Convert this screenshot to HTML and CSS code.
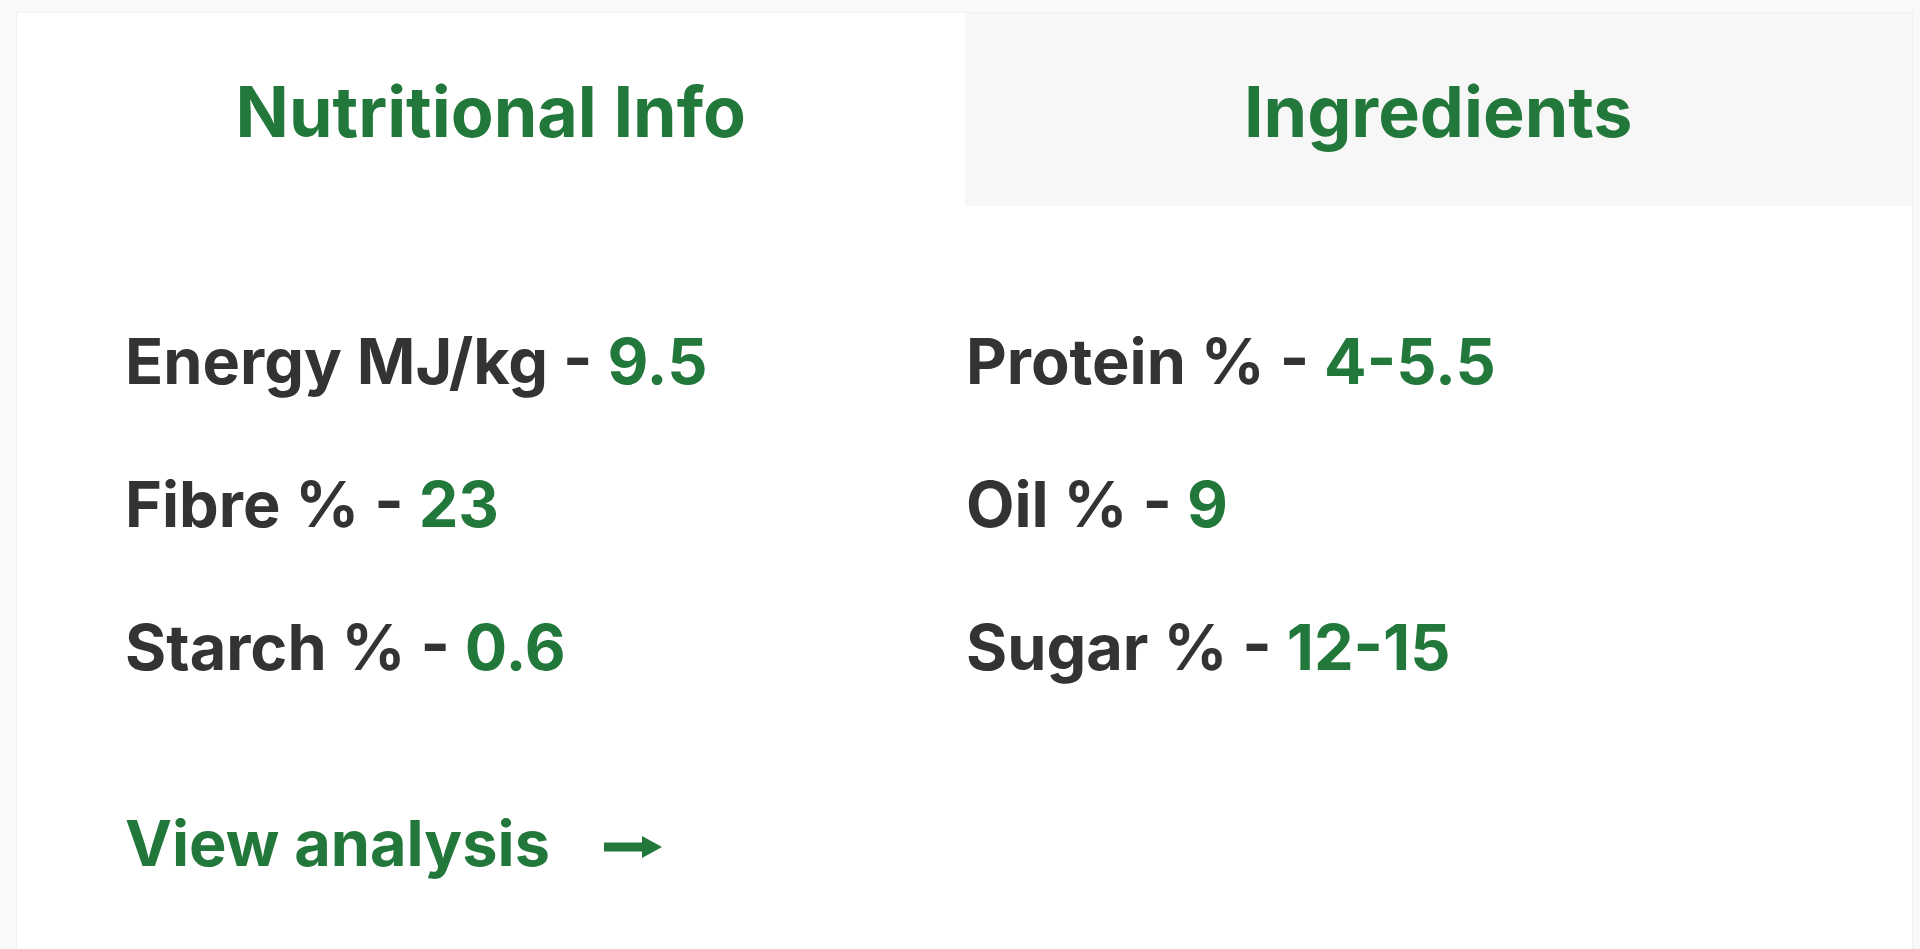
FILE: index.html
```html
<!DOCTYPE html>
<html lang="en">
<head>
    <meta charset="UTF-8">
    <meta name="viewport" content="width=device-width, initial-scale=1.0">
    <title>Nutritional Info</title>
    <link rel="stylesheet" href="styles.css">
</head>
<body>
    <div class="card">
        <div class="tabs">
            <div class="tab active">Nutritional Info</div>
            <div class="tab">Ingredients</div>
        </div>
        <div class="panel">
            <div class="facts">
                <div class="fact">Energy MJ/kg - <span class="value">9.5</span></div>
                <div class="fact">Protein % - <span class="value">4-5.5</span></div>
                <div class="fact">Fibre % - <span class="value">23</span></div>
                <div class="fact">Oil % - <span class="value">9</span></div>
                <div class="fact">Starch % - <span class="value">0.6</span></div>
                <div class="fact">Sugar % - <span class="value">12-15</span></div>
            </div>
            <a href="#" class="analysis-link">
                View analysis
                <svg class="arrow" width="58" height="22" viewBox="0 0 58 22">
                    <rect x="0" y="6.5" width="42" height="9" fill="currentColor"/>
                    <polygon points="38,0 58,11 38,22" fill="currentColor"/>
                </svg>
            </a>
        </div>
    </div>
</body>
</html>
```
FILE: styles.css
```css
body {
    margin: 0;
    padding: 12px 7px 0 16px;
    background-color: #f9f9f9;
    font-family: Inter, "Noto Sans", sans-serif;
    overflow: hidden;
}
.card {
    background-color: #fff;
    border: 1px solid #f1f1f1;
    border-bottom: none;
}
.tabs {
    display: grid;
    grid-template-columns: 1fr 1fr;
}
.tab {
    height: 193px;
    display: flex;
    align-items: center;
    justify-content: center;
    padding-top: 4px;
    box-sizing: border-box;
    font-size: 70px;
    font-weight: 700;
    color: #22783a;
    background-color: #f7f7f7;
}
.tab.active {
    background-color: #fff;
}
.panel {
    padding: 84px 0 80px 108px;
}
.facts {
    display: grid;
    grid-template-columns: 841px 1fr;
}
.fact {
    font-size: 63px;
    font-weight: 700;
    line-height: 143px;
    color: #333;
}
.value {
    color: #22783a;
}
.analysis-link {
    display: inline-flex;
    align-items: center;
    gap: 54px;
    margin-top: 53px;
    font-size: 63px;
    font-weight: 700;
    line-height: 143px;
    color: #22783a;
    text-decoration: none;
}
.arrow {
    display: block;
    margin-top: 6px;
}
```
